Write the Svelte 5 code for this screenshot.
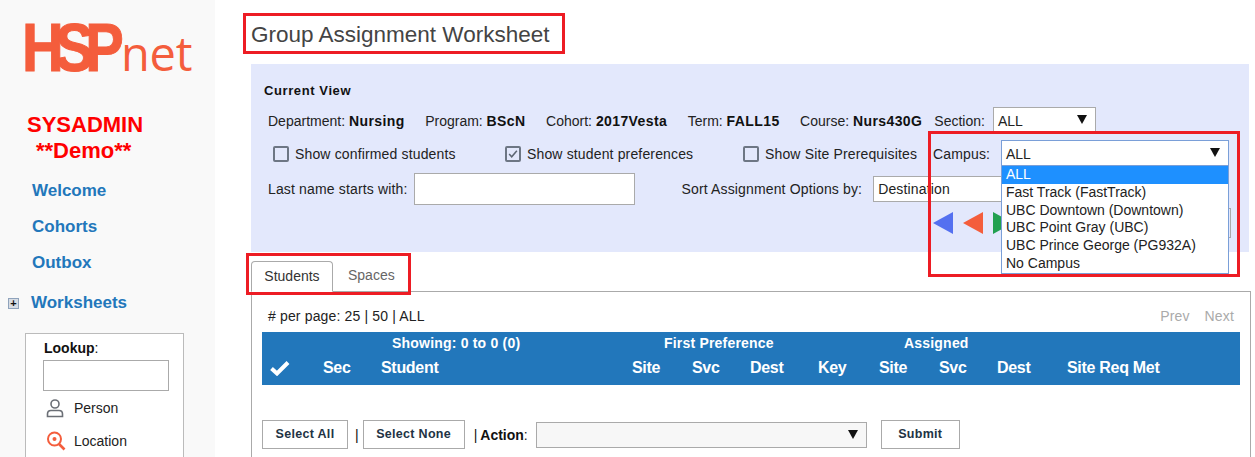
<script>
  const campuses = ['ALL', 'Fast Track (FastTrack)', 'UBC Downtown (Downtown)', 'UBC Point Gray (UBC)', 'UBC Prince George (PG932A)', 'No Campus'];
  const nav = ['Welcome', 'Cohorts', 'Outbox'];
  const cols = ['Sec', 'Student', 'Site', 'Svc', 'Dest', 'Key', 'Site', 'Svc', 'Dest', 'Site Req Met'];
</script>

<div class="page">
  <aside class="side">
    <div class="logo"><span class="hsp">HSP</span><span class="net">net</span></div>
    <div class="role">SYSADMIN<br /><span class="demo">**Demo**</span></div>
    {#each nav as item}
      <div class="nav">{item}</div>
    {/each}
    <div class="ws">
      <span class="plus">+</span>
      <span>Worksheets</span>
    </div>
    <div class="lookup">
      <div class="lk-title"><b>Lookup</b>:</div>
      <div class="lk-input"></div>
      <div class="lk-row">
        <svg width="20" height="20" viewBox="0 0 20 20" fill="none" stroke="#6b6f76" stroke-width="1.6">
          <circle cx="9" cy="6" r="4" />
          <path d="M1.500 18.500v-2.500c0-2 1.500-3.500 3.500-3.500h8c2 0 3.500 1.500 3.500 3.500v2.500z" />
        </svg>
        <span>Person</span>
      </div>
      <div class="lk-row">
        <svg width="20" height="20" viewBox="0 0 20 20" fill="none" stroke="#f45d3c" stroke-width="2">
          <circle cx="8.500" cy="8" r="6.500" />
          <circle cx="8.500" cy="8" r="2" fill="#f45d3c" stroke="none" />
          <path d="M13 13l5.500 5.500" stroke-width="2.600" />
        </svg>
        <span>Location</span>
      </div>
    </div>
  </aside>

  <main class="main">
    <h1>Group Assignment Worksheet</h1>

    <section class="panel">
      <div class="cv">Current View</div>
      <div class="row r1">
        <span class="t">Department: <b>Nursing</b></span>
        <span class="t">Program: <b>BScN</b></span>
        <span class="t">Cohort: <b>2017Vesta</b></span>
        <span class="t">Term: <b>FALL15</b></span>
        <span class="t">Course: <b>Nurs430G</b></span>
        <span class="sec"><span class="t">Section:</span> <span class="sel sel-sec">ALL<i class="arr"></i></span></span>
      </div>
      <div class="row r2">
        <label class="chk c1"><span class="box"></span>Show confirmed students</label>
        <label class="chk c2">
          <span class="box">
            <svg width="14" height="14" viewBox="0 0 14 14" fill="none" stroke="#5d6673" stroke-width="1.800"><path d="M2.500 7l3 3.200 6-7" /></svg>
          </span>Show student preferences
        </label>
        <label class="chk c3"><span class="box"></span>Show Site Prerequisites</label>
        <span class="campus t">Campus:</span>
        <div class="campus-wrap">
          <span class="sel sel-campus">ALL<i class="arr"></i></span>
          <ul class="drop">
            {#each campuses as c, i}
              <li class:on={i === 0}>{c}</li>
            {/each}
          </ul>
        </div>
      </div>
      <div class="row r3">
        <span>Last name starts with:</span>
        <span class="txt"></span>
        <span class="sort">Sort Assignment Options by:</span>
        <span class="sel sel-sort">Destination</span>
      </div>
      <div class="row r4">
        <i class="tri blue"></i>
        <i class="tri red"></i>
        <i class="tri green"></i>
        <span class="stub"></span>
      </div>
    </section>

    <div class="tabs">
      <span class="tab active">Students</span>
      <span class="tab">Spaces</span>
    </div>
    <section class="content">
      <div class="pager">
        <span># per page: 25 | 50 | ALL</span>
        <span class="pn"><span>Prev</span><span>Next</span></span>
      </div>
      <div class="thead">
        <div class="th1">
          <span class="showing">Showing: 0 to 0 (0)</span>
          <span class="first">First Preference</span>
          <span>Assigned</span>
        </div>
        <div class="th2">
          <span>
            <svg width="20" height="15" viewBox="0 0 20 15" fill="none" stroke="#fff" stroke-width="4"><path d="M1.500 7.500l5.500 5 11-11" /></svg>
          </span>
          {#each cols as c}
            <span>{c}</span>
          {/each}
        </div>
      </div>
      <div class="actions">
        <span class="btn b-all">Select All</span>
        <span class="bar">|</span>
        <span class="btn b-none">Select None</span>
        <span class="bar b2">|</span>
        <span class="act"><b>Action</b>:</span>
        <span class="sel sel-act"><i class="arr"></i></span>
        <span class="btn b-sub">Submit</span>
      </div>
    </section>

    <div class="note n-title"></div>
    <div class="note n-campus"></div>
    <div class="note n-tabs"></div>
  </main>
</div>

<style>
  :global(body) {
    overflow: hidden;
  }
  .page {
    display: flex;
    height: 457px;
    overflow: hidden;
    font-family: "Liberation Sans", Arial, sans-serif;
    font-size: 14px;
    color: #222;
    background: #fff;
  }
  .side {
    width: 215px;
    flex: none;
    background: #f9f9f9;
    box-sizing: border-box;
    padding-top: 14px;
  }
  .logo {
    color: #f45d3c;
    height: 66px;
    line-height: 66px;
    padding-left: 22px;
    white-space: nowrap;
    display: flex;
    align-items: baseline;
  }
  .hsp {
    display: inline-block;
    width: 99px;
    font-size: 68px;
    font-weight: 700;
    letter-spacing: -10px;
    -webkit-text-stroke: 1px #f45d3c;
    transform: scaleX(0.85);
    transform-origin: left;
  }
  .net {
    font-family: "Open Sans", sans-serif;
    font-weight: 400;
    font-size: 47px;
    letter-spacing: -0.2px;
  }
  .role {
    margin: 32px 0 0 27px;
    color: #f00;
    font-weight: 700;
    font-size: 22px;
    line-height: 26px;
  }
  .demo {
    margin-left: 9px;
  }
  .nav {
    margin: 14px 0 0 32px;
    height: 22px;
    line-height: 22px;
    font-size: 17px;
    font-weight: 700;
    color: #2277bb;
  }
  .nav + .nav {
    margin-top: 14px;
  }
  .role + .nav {
    margin-top: 16px;
  }
  .ws {
    display: flex;
    align-items: center;
    margin: 17px 0 0 8px;
    height: 24px;
    font-size: 17px;
    font-weight: 700;
    color: #2277bb;
  }
  .plus {
    width: 9px;
    height: 9px;
    border: 1px solid #8fa3bc;
    background: #d8dde4;
    margin-right: 12px;
    font-size: 11px;
    line-height: 8px;
    text-align: center;
    color: #111;
  }
  .lookup {
    margin: 18px 0 0 25px;
    width: 159px;
    height: 140px;
    box-sizing: border-box;
    background: #fff;
    border: 1px solid #bbb;
    padding: 6px 0 0 17px;
  }
  .lk-title {
    font-size: 14px;
    line-height: 16px;
    color: #111;
    padding-left: 1px;
  }
  .lk-input {
    width: 124px;
    height: 29px;
    border: 1px solid #aaa;
    margin: 4px 0 0 0;
    background: #fff;
  }
  .lk-row {
    display: flex;
    align-items: center;
    gap: 8px;
    height: 33px;
    margin-left: 3px;
    font-size: 14px;
  }
  .main {
    flex: 1;
    position: relative;
    padding-left: 36px;
    width: 1000px;
  }
  h1 {
    margin: 0;
    height: 64px;
    line-height: 70px;
    font-size: 22.500px;
    font-weight: 400;
    color: #444;
  }
  .panel {
    width: 998px;
    height: 188px;
    background: #e3e8fc;
    padding-top: 19px;
    box-sizing: border-box;
  }
  .cv {
    margin-left: 13px;
    font-size: 13px;
    font-weight: 700;
    line-height: 16px;
    color: #111;
    letter-spacing: 0.6px;
  }
  .row {
    display: flex;
    align-items: center;
    white-space: nowrap;
  }
  .row b {
    letter-spacing: 0.4px;
    color: #111;
  }
  .t {
    padding-top: 2px;
  }
  .r1 {
    margin: 8px 0 0 17px;
    gap: 20.500px;
    height: 26px;
  }
  .sec {
    margin-left: -8.500px;
    display: flex;
    align-items: center;
    gap: 8px;
  }
  .sel {
    display: block;
    position: relative;
    box-sizing: border-box;
    background: #fff;
    border: 1px solid #aaa;
    padding-left: 4px;
    color: #222;
  }
  .arr {
    position: absolute;
    top: 7px;
    right: 8px;
    width: 0;
    height: 0;
    border-left: 5px solid transparent;
    border-right: 5px solid transparent;
    border-top: 9px solid #111;
  }
  .sel-sec {
    width: 103px;
    height: 26px;
    line-height: 26px;
  }
  .r2 {
    margin: 7px 0 0 22px;
    height: 26px;
  }
  .chk {
    display: flex;
    align-items: center;
    gap: 6px;
    letter-spacing: 0.15px;
    padding-top: 2px;
  }
  .box {
    width: 16px;
    height: 16px;
    box-sizing: border-box;
    border: 2px solid #6d7684;
    border-radius: 2px;
    display: flex;
    align-items: center;
    justify-content: center;
  }
  .c1 {
    width: 232px;
  }
  .c2 {
    width: 238px;
  }
  .c3 {
    width: 190px;
  }
  .campus {
    width: 68px;
    letter-spacing: 0.15px;
  }
  .campus-wrap {
    position: relative;
    z-index: 2;
  }
  .sel-campus {
    width: 228px;
    height: 26px;
    line-height: 26px;
    border-color: #7a9fd8;
  }
  .drop {
    position: absolute;
    left: 0;
    top: 26px;
    margin: 0;
    padding: 0;
    width: 228px;
    height: 108px;
    box-sizing: border-box;
    list-style: none;
    background: #fff;
    border: 1px solid #7a9fd8;
    border-top: none;
  }
  .drop li {
    height: 17.800px;
    line-height: 17.800px;
    padding-left: 4px;
  }
  .drop li.on {
    background: #1e90ff;
    color: #fff;
  }
  .r3 {
    margin: 7px 0 0 17px;
    height: 32px;
    letter-spacing: 0.15px;
  }
  .txt {
    display: block;
    width: 221px;
    height: 32px;
    box-sizing: border-box;
    border: 1px solid #aaa;
    background: #fff;
    margin-left: 7px;
  }
  .sort {
    margin-left: 46px;
  }
  .sel-sort {
    width: 300px;
    height: 26px;
    line-height: 25px;
    margin-left: 11px;
  }
  .r4 {
    margin: 5px 0 0 682px;
    height: 26px;
  }
  .tri {
    width: 0;
    height: 0;
    border-top: 11px solid transparent;
    border-bottom: 11px solid transparent;
    margin-right: 10px;
  }
  .blue {
    border-right: 20px solid #5470f0;
  }
  .red {
    border-right: 20px solid #f45d3c;
  }
  .green {
    border-left: 20px solid #22a050;
  }
  .stub {
    width: 40px;
    height: 30px;
    box-sizing: border-box;
    margin-left: 168px;
    border: 1px solid #aaa;
  }
  .tabs {
    display: flex;
    margin-top: 9px;
    height: 31px;
    position: relative;
    z-index: 1;
  }
  .tab {
    height: 31px;
    line-height: 29px;
    box-sizing: border-box;
    padding: 0 15px;
    text-align: center;
    font-size: 14px;
    color: #666;
  }
  .tab.active {
    width: 82px;
    padding: 0;
    color: #333;
    background: #fff;
    border: 1px solid #aaa;
    border-bottom: 1px solid #fff;
    border-radius: 4px 4px 0 0;
  }
  .content {
    margin-top: -1px;
    width: 1000px;
    height: 180px;
    box-sizing: border-box;
    border: 1px solid #aaa;
    padding: 0 10px;
  }
  .pager {
    display: flex;
    justify-content: space-between;
    height: 40px;
    line-height: 48px;
    padding: 0 0 0 6px;
    letter-spacing: 0.15px;
  }
  .pn {
    display: flex;
    gap: 15px;
    color: #aaa;
    padding-right: 6px;
  }
  .thead {
    height: 53px;
    background: #2277bb;
    color: #fff;
    font-weight: 700;
  }
  .th1 {
    display: flex;
    height: 22px;
    line-height: 22px;
    padding-left: 130px;
    letter-spacing: 0.2px;
  }
  .showing {
    width: 272px;
  }
  .first {
    width: 240px;
  }
  .th2 {
    display: grid;
    grid-template-columns: 53px 58px 251px 60px 58px 68px 61px 60px 58px 70px 1fr;
    padding-left: 8px;
    height: 31px;
    line-height: 28px;
    font-size: 16px;
    letter-spacing: -0.3px;
  }
  .th2 svg {
    display: block;
    margin-top: 7px;
  }
  .actions {
    display: flex;
    align-items: center;
    margin-top: 35px;
    height: 29px;
  }
  .btn {
    display: block;
    box-sizing: border-box;
    height: 29px;
    line-height: 27px;
    border: 1px solid #aaa;
    text-align: center;
    font-size: 12.500px;
    font-weight: 700;
    color: #234;
    letter-spacing: 0.3px;
    background: #fff;
  }
  .b-all {
    width: 86px;
  }
  .b-none {
    width: 102px;
  }
  .b-sub {
    width: 79px;
    margin-left: 14px;
  }
  .bar {
    margin: 0 4px 0 7px;
    color: #111;
  }
  .b2 {
    margin: 0 3px 0 9px;
  }
  .act b {
    color: #111;
  }
  .sel-act {
    width: 331px;
    height: 26px;
    margin-left: 8px;
    background: #f7f7f7;
  }
  .note {
    position: absolute;
    box-sizing: border-box;
    border: 3px solid #ed1c24;
    z-index: 3;
  }
  .n-title {
    left: 28px;
    top: 13px;
    width: 322px;
    height: 41px;
  }
  .n-campus {
    left: 713px;
    top: 131px;
    width: 312px;
    height: 146px;
  }
  .n-tabs {
    left: 31px;
    top: 253px;
    width: 165px;
    height: 42px;
  }
</style>
